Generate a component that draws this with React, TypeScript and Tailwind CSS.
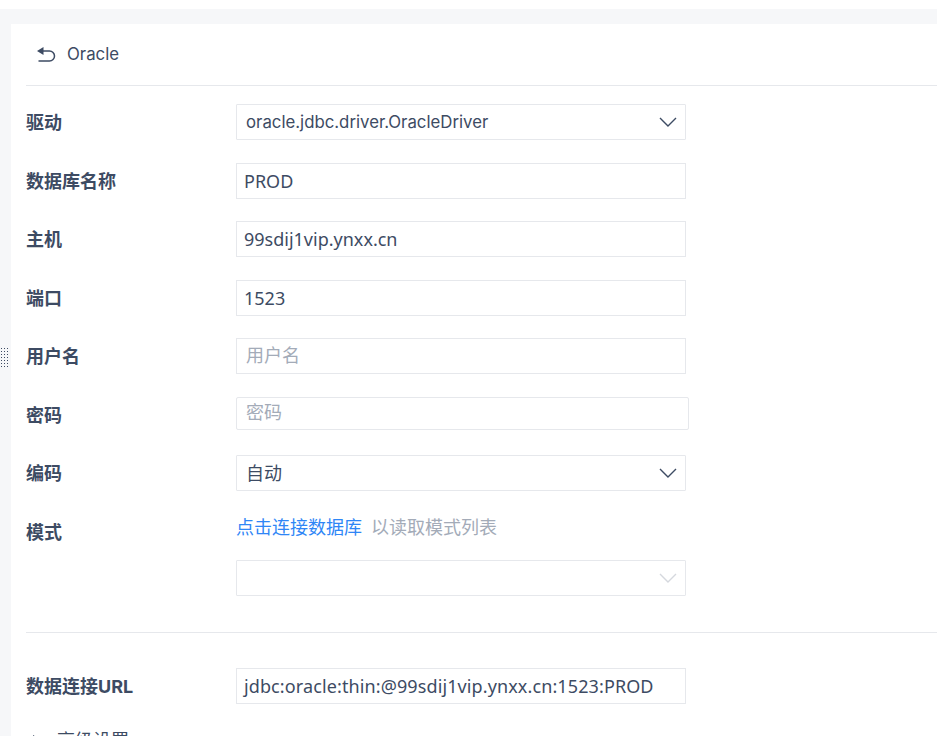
const font = "font-['Inter','Noto_Sans_CJK_SC',sans-serif]";

function Chevron({ faded }: { faded?: boolean }) {
  return (
    <svg width="18" height="10" viewBox="0 0 18 10" fill="none" className={faded ? "text-[#d5d8de]" : "text-[#3d4b63]"}>
      <path d="M1 1l8 8 8-8" stroke="currentColor" strokeWidth="1.4" />
    </svg>
  );
}

function Select({ value, faded, large }: { value?: string; faded?: boolean; large?: boolean }) {
  return (
    <div className={`flex h-9 w-[450px] items-center justify-between rounded-[1px] border border-[#e6e8ec] pl-[9px] pr-[8px] text-[#3d4b63] ${large ? "text-[18px]" : "text-[16.8px]"}`}>
      <span>{value}</span>
      <Chevron faded={faded} />
    </div>
  );
}

function Input({ value, placeholder, wide }: { value?: string; placeholder?: string; wide?: boolean }) {
  return (
    <div className={`flex h-9 w-[450px] items-center border border-[#e6e8ec] px-[7px] font-['Noto_Sans','Noto_Sans_CJK_SC',sans-serif] text-[18px] text-[#3d4b63] ${wide ? "tracking-[0.11px]" : ""} ${value ? "pt-[1px]" : "pb-[1px]"}`}>
      {value ?? <span className="pl-[2px] text-[#a3abb8]">{placeholder}</span>}
    </div>
  );
}

function Row({ label, children }: { label: string; children: React.ReactNode }) {
  return (
    <div className="mb-[22.5px] flex h-9 items-start">
      <div className="flex h-9 w-[210px] shrink-0 items-center pt-[1px] text-[18px] font-bold text-[#3d4b63]">{label}</div>
      {children}
    </div>
  );
}

export default function App() {
  return (
    <div className={`${font} h-[736px] overflow-hidden bg-white`}>
      <div className="relative mt-[9px] h-[727px] overflow-hidden bg-[#f6f7f9] pl-[11px] pt-[15px]">
        <div className="absolute left-0 top-[338px] h-[20px] w-[8px] bg-[radial-gradient(#3d4b63_0.7px,transparent_0.8px)] bg-[length:3px_3px]" />
        <div className="h-[800px] bg-white pl-[15px]">
          <div className="flex h-[62px] items-center gap-[11px] border-b border-[#e6e8ec] pl-[10px] text-[16.8px] text-[#3d4b63]">
            <svg width="20" height="18" viewBox="0 0 20 18" fill="none">
              <path d="M6 5h7.5a5 5 0 0 1 0 10H2.5" stroke="#3d4b63" strokeWidth="1.5" />
              <path d="M1 5l6.5-4v8z" fill="#3d4b63" />
            </svg>
            <span>Oracle</span>
          </div>
          <div className="pt-[18.4px]">
            <Row label="驱动"><Select value="oracle.jdbc.driver.OracleDriver" /></Row>
            <Row label="数据库名称"><Input value="PROD" /></Row>
            <Row label="主机"><Input value="99sdij1vip.ynxx.cn" /></Row>
            <Row label="端口"><Input value="1523" /></Row>
            <Row label="用户名"><Input placeholder="用户名" /></Row>
            <Row label="密码">
              <div className="flex h-[33px] w-[453px] items-center rounded-[2px] border border-[#e6e8ec] pb-[1px] pl-[9px] text-[18px] text-[#a3abb8]">密码</div>
            </Row>
            <Row label="编码"><Select value="自动" large /></Row>
            <div className="flex h-[28px] items-start">
              <div className="flex h-9 w-[210px] shrink-0 items-center pt-[1px] text-[18px] font-bold text-[#3d4b63]">模式</div>
              <div className="mt-[-4px] text-[18px] leading-[36px] text-[#a3abb8]">
                <span className="text-[#2f86f6]">点击连接数据库</span>
                <span className="ml-[9px]">以读取模式列表</span>
              </div>
            </div>
            <div className="ml-[210px] mt-[18px]"><Select faded /></div>
            <div className="mb-[35.5px] mt-[36px] h-px bg-[#e6e8ec]" />
            <div className="flex h-9 items-start">
              <div className="flex h-9 w-[210px] shrink-0 items-center pt-[1px] text-[18px] font-bold text-[#3d4b63]">数据连接URL</div>
              <Input value="jdbc:oracle:thin:@99sdij1vip.ynxx.cn:1523:PROD" wide />
            </div>
            <div className="mt-[18px] flex h-9 items-center pl-[7px] text-[#3d4b63]">
              <svg width="8" height="10" viewBox="0 0 8 10"><path d="M0 0l8 5-8 5z" fill="currentColor" /></svg>
              <span className="ml-[16px] text-[18px]">高级设置</span>
            </div>
          </div>
        </div>
      </div>
    </div>
  );
}
